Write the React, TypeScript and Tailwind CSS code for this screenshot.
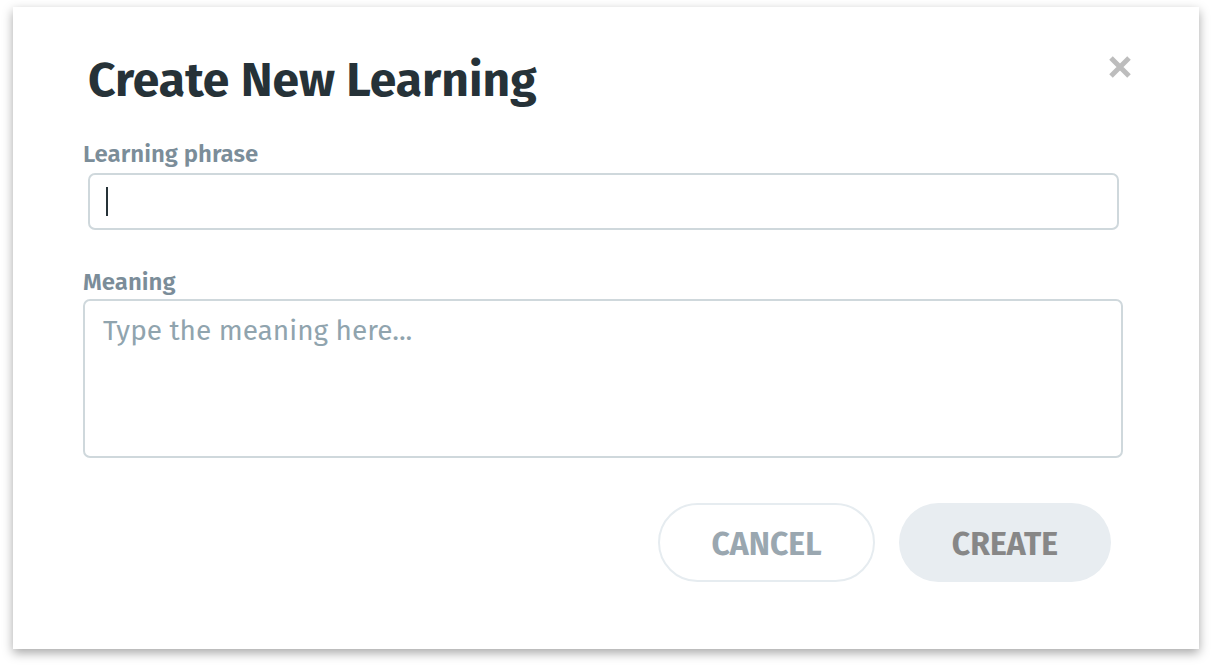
import { useState } from "react";

// Create New Learning — modal dialog

const FONT = { fontFamily: '"Fira Sans", Lato, "Noto Sans", sans-serif' };

export default function App() {
  const [phrase, setPhrase] = useState("");
  const [meaning, setMeaning] = useState("");

  return (
    <div className="w-[1211px] h-[666px] bg-white pt-[7px] pl-[13px]" style={FONT}>
      <div className="relative w-[1186px] h-[642px] bg-white shadow-[0_4px_10px_rgba(0,0,0,0.35)] pl-[70px] pr-[77px]">
        {/* Close */}
        <button className="absolute left-[1095px] top-[48px] w-[24px] h-[24px] flex items-center justify-center">
          <svg width="24" height="24" viewBox="0 0 24 24">
            <path d="M3 3 L21 21 M21 3 L3 21" stroke="#bdbdbd" strokeWidth="5" strokeLinecap="butt" />
          </svg>
        </button>

        <h1 className="ml-[5px] pt-[43px] text-[48px] leading-[60px] font-bold text-[#263238]">
          Create New Learning
        </h1>

        <label className="block mt-[30px] text-[24px] leading-[28px] font-semibold text-[#7b8d99]">
          Learning phrase
        </label>
        <div className="relative ml-[5px] mt-[5px] w-[1031px]">
          <input
            value={phrase}
            onChange={(e) => setPhrase(e.target.value)}
            className="block w-full h-[57px] border-2 border-[#cfd8dc] rounded-[7px] px-[17px] text-[28px] text-[#263238] caret-[#263238] outline-none"
          />
          {phrase === "" && (
            <span className="absolute left-[18px] top-[14px] w-[2px] h-[29px] bg-[#263238] pointer-events-none" />
          )}
        </div>

        <label className="block mt-[38px] text-[24px] leading-[28px] font-semibold text-[#7b8d99]">
          Meaning
        </label>
        <textarea
          value={meaning}
          onChange={(e) => setMeaning(e.target.value)}
          placeholder="Type the meaning here..."
          className="block mt-[3px] w-[1040px] h-[159px] border-2 border-[#cfd8dc] rounded-[7px] px-[18px] py-[12px] text-[28px] leading-[36px] text-[#263238] placeholder:text-[#90a4ae] outline-none resize-none"
        />

        <div className="flex justify-end gap-[24px] mt-[45px] pr-[11px]">
          <button className="w-[217px] h-[79px] pt-[3px] rounded-full border-2 border-[#e6ecf0] bg-white text-[32px] font-bold text-[#9aa7b0]">
            CANCEL
          </button>
          <button className="w-[212px] h-[79px] pt-[3px] rounded-full bg-[#e8edf1] text-[32px] font-bold text-[#878787]">
            CREATE
          </button>
        </div>
      </div>
    </div>
  );
}
